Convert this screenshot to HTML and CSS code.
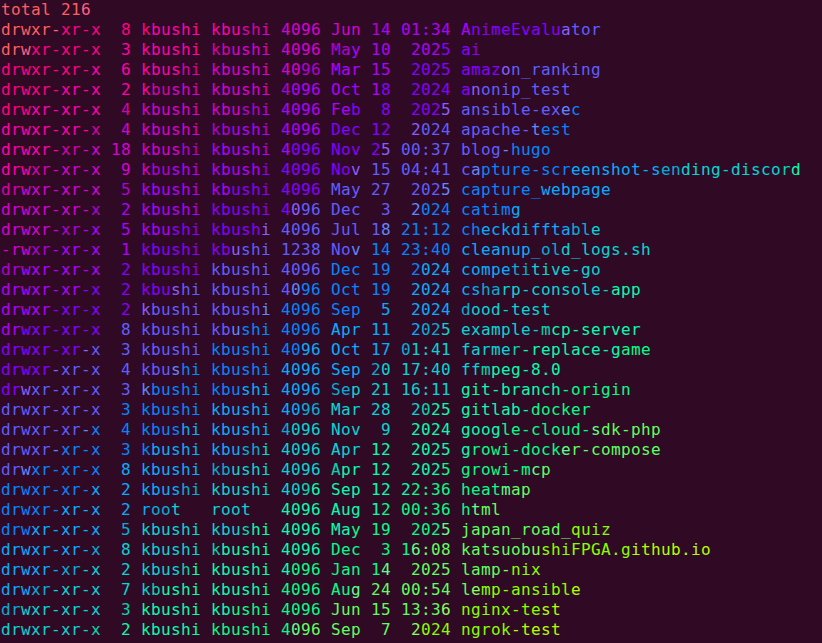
FILE: index.html
```html
<!DOCTYPE html>
<html lang="en">
<head>
<meta charset="utf-8">
<title>ls -l | lolcat</title>
<link rel="stylesheet" href="styles.css">
</head>
<body>
<div class="term" id="term">
<div class="line">total 216</div>
<div class="line">drwxr-xr-x  8 kbushi kbushi 4096 Jun 14 01:34 AnimeEvaluator</div>
<div class="line">drwxr-xr-x  3 kbushi kbushi 4096 May 10  2025 ai</div>
<div class="line">drwxr-xr-x  6 kbushi kbushi 4096 Mar 15  2025 amazon_ranking</div>
<div class="line">drwxr-xr-x  2 kbushi kbushi 4096 Oct 18  2024 anonip_test</div>
<div class="line">drwxr-xr-x  4 kbushi kbushi 4096 Feb  8  2025 ansible-exec</div>
<div class="line">drwxr-xr-x  4 kbushi kbushi 4096 Dec 12  2024 apache-test</div>
<div class="line">drwxr-xr-x 18 kbushi kbushi 4096 Nov 25 00:37 blog-hugo</div>
<div class="line">drwxr-xr-x  9 kbushi kbushi 4096 Nov 15 04:41 capture-screenshot-sending-discord</div>
<div class="line">drwxr-xr-x  5 kbushi kbushi 4096 May 27  2025 capture_webpage</div>
<div class="line">drwxr-xr-x  2 kbushi kbushi 4096 Dec  3  2024 catimg</div>
<div class="line">drwxr-xr-x  5 kbushi kbushi 4096 Jul 18 21:12 checkdifftable</div>
<div class="line">-rwxr-xr-x  1 kbushi kbushi 1238 Nov 14 23:40 cleanup_old_logs.sh</div>
<div class="line">drwxr-xr-x  2 kbushi kbushi 4096 Dec 19  2024 competitive-go</div>
<div class="line">drwxr-xr-x  2 kbushi kbushi 4096 Oct 19  2024 csharp-console-app</div>
<div class="line">drwxr-xr-x  2 kbushi kbushi 4096 Sep  5  2024 dood-test</div>
<div class="line">drwxr-xr-x  8 kbushi kbushi 4096 Apr 11  2025 example-mcp-server</div>
<div class="line">drwxr-xr-x  3 kbushi kbushi 4096 Oct 17 01:41 farmer-replace-game</div>
<div class="line">drwxr-xr-x  4 kbushi kbushi 4096 Sep 20 17:40 ffmpeg-8.0</div>
<div class="line">drwxr-xr-x  3 kbushi kbushi 4096 Sep 21 16:11 git-branch-origin</div>
<div class="line">drwxr-xr-x  3 kbushi kbushi 4096 Mar 28  2025 gitlab-docker</div>
<div class="line">drwxr-xr-x  4 kbushi kbushi 4096 Nov  9  2024 google-cloud-sdk-php</div>
<div class="line">drwxr-xr-x  3 kbushi kbushi 4096 Apr 12  2025 growi-docker-compose</div>
<div class="line">drwxr-xr-x  8 kbushi kbushi 4096 Apr 12  2025 growi-mcp</div>
<div class="line">drwxr-xr-x  2 kbushi kbushi 4096 Sep 12 22:36 heatmap</div>
<div class="line">drwxr-xr-x  2 root   root   4096 Aug 12 00:36 html</div>
<div class="line">drwxr-xr-x  5 kbushi kbushi 4096 May 19  2025 japan_road_quiz</div>
<div class="line">drwxr-xr-x  8 kbushi kbushi 4096 Dec  3 16:08 katsuobushiFPGA.github.io</div>
<div class="line">drwxr-xr-x  2 kbushi kbushi 4096 Jan 14  2025 lamp-nix</div>
<div class="line">drwxr-xr-x  7 kbushi kbushi 4096 Aug 24 00:54 lemp-ansible</div>
<div class="line">drwxr-xr-x  3 kbushi kbushi 4096 Jun 15 13:36 nginx-test</div>
<div class="line">drwxr-xr-x  2 kbushi kbushi 4096 Sep  7  2024 ngrok-test</div>
</div>
<script src="script.js"></script>
</body>
</html>
```
FILE: styles.css
```css
html, body {
  margin: 0;
  padding: 0;
  background: #300a24;
  height: 100%;
  overflow: hidden;
}
.term {
  display: flex;
  flex-direction: column;
  padding: 0 0 0 1px;
  font-family: "DejaVu Sans Mono", "Liberation Mono", monospace;
  font-size: 16px;
  letter-spacing: 0.37px;
  line-height: 20px;
  color: #ff5f5f;
}
.line {
  height: 20px;
  white-space: pre;
}
.ch {
  display: inline-block;
  width: 10px;
  letter-spacing: 0;
}
```
FILE: script.js
```js
(function () {
  var FREQ = 0.1, SPREAD = 3.0, OS = 15.0;
  var LV = [0, 95, 135, 175, 215, 255];

  function rainbow(i) {
    var r = Math.floor(Math.sin(FREQ * i) * 127 + 128);
    var g = Math.floor(Math.sin(FREQ * i + 2 * Math.PI / 3) * 127 + 128);
    var b = Math.floor(Math.sin(FREQ * i + 4 * Math.PI / 3) * 127 + 128);
    return [r, g, b];
  }

  function to256(c) {
    var r = c[0], g = c[1], b = c[2];
    var sep = 42.5, gray = false;
    while (true) {
      if (r < sep || g < sep || b < sep) {
        gray = r < sep && g < sep && b < sep;
        break;
      }
      sep += 42.5;
    }
    if (gray) {
      var n = Math.min(23, Math.round((r + g + b) / 33));
      var l = 8 + 10 * n;
      return [l, l, l];
    }
    return [LV[Math.floor(6 * r / 256)], LV[Math.floor(6 * g / 256)], LV[Math.floor(6 * b / 256)]];
  }

  var lines = document.querySelectorAll('#term .line');
  lines.forEach(function (line, n) {
    var text = line.textContent;
    line.textContent = '';
    for (var i = 0; i < text.length; i++) {
      var s = document.createElement('span');
      s.className = 'ch';
      s.textContent = text[i];
      var c = to256(rainbow(OS + n + i / SPREAD));
      s.style.color = 'rgb(' + c[0] + ',' + c[1] + ',' + c[2] + ')';
      line.appendChild(s);
    }
  });
})();
```
